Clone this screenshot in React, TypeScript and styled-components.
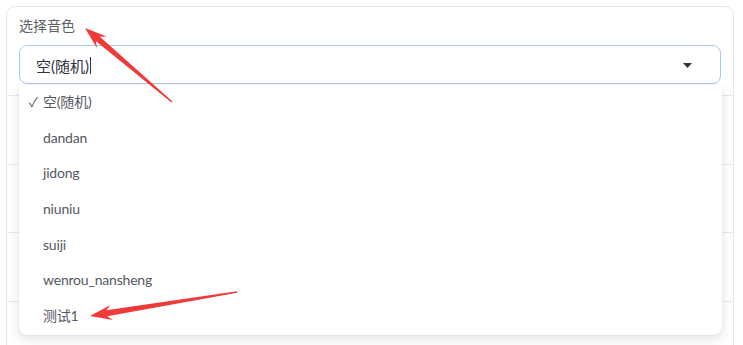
import React from 'react';
import styled, { createGlobalStyle } from 'styled-components';

const GlobalStyle = createGlobalStyle`
  html, body {
    margin: 0;
    padding: 0;
    background: #ffffff;
    overflow: hidden;
  }
  body {
    font-family: Lato, "Noto Sans CJK SC", sans-serif;
    color: #31333f;
  }
`;

const Page = styled.div`
  position: relative;
  width: 743px;
  height: 345px;
  overflow: hidden;
  padding: 6px 9px 0 6px;
  box-sizing: border-box;
`;

const Card = styled.div`
  border: 1px solid #e4e6ea;
  border-radius: 9px;
  padding: 9px 12px 0 12px;
  height: 400px;
  position: relative;
`;

const Label = styled.div`
  font-size: 14px;
  line-height: 20px;
  color: #5d6169;
  margin-bottom: 9px;
`;

const SelectWrap = styled.div`
  position: relative;
`;

const SelectBox = styled.div`
  height: 39px;
  box-sizing: border-box;
  border: 1px solid #a9c9f2;
  border-radius: 8px;
  display: flex;
  align-items: center;
  padding: 2px 28px 0 16px;
  font-size: 15px;
  color: #31333f;
`;

const Cursor = styled.span`
  display: inline-block;
  width: 1px;
  height: 17px;
  background: #31333f;
  margin-left: 1px;
`;

const Caret = styled.svg`
  margin-left: auto;
  width: 9px;
  height: 5px;
`;

const Menu = styled.ul`
  position: absolute;
  left: 0;
  right: -1px;
  top: 40px;
  margin: 0;
  padding: 0;
  list-style: none;
  background: #ffffff;
  border-radius: 0 0 8px 8px;
  box-shadow: 0 4px 12px rgba(0, 0, 0, 0.12), 0 0 1px rgba(0, 0, 0, 0.18);
  z-index: 2;
`;

const Item = styled.li<{ $selected?: boolean }>`
  height: 35.7px;
  display: flex;
  align-items: center;
  padding: 0 0 3px ${p => (p.$selected ? '10px' : '24px')};
  box-sizing: border-box;
  font-size: 14px;
  letter-spacing: -0.2px;
  color: #54585f;
`;

const Check = styled.span`
  width: 14px;
  font-size: 13px;
  color: #54585f;
`;

const Row = styled.div`
  height: 68.5px;
  margin: 0 -12px;
  border-top: 1px solid #e8e9ec;
  box-sizing: border-box;
`;

const Spacer = styled.div`
  height: 11px;
`;

const NextInput = styled.div`
  margin-top: 39px;
  height: 40px;
  border: 1px solid #e2e4e8;
  border-radius: 8px;
`;

const Overlay = styled.svg`
  position: absolute;
  left: 0;
  top: 0;
  pointer-events: none;
  z-index: 5;
`;

// red annotation arrow, tail (tx,ty) -> tip (hx,hy)
const arrowPoints = (tx: number, ty: number, hx: number, hy: number) => {
  const dx = hx - tx;
  const dy = hy - ty;
  const len = Math.hypot(dx, dy);
  const ux = dx / len;
  const uy = dy / len;
  const nx = -uy;
  const ny = ux;
  const headLen = 22;
  const neck = 17;
  const bx = hx - ux * headLen;
  const by = hy - uy * headLen;
  const cx = hx - ux * neck;
  const cy = hy - uy * neck;
  const pts = [
    [tx + nx * 0.8, ty + ny * 0.8],
    [cx + nx * 3, cy + ny * 3],
    [bx + nx * 7.5, by + ny * 7.5],
    [hx, hy],
    [bx - nx * 7.5, by - ny * 7.5],
    [cx - nx * 3, cy - ny * 3],
    [tx - nx * 0.8, ty - ny * 0.8],
  ];
  return pts.map(p => p.map(v => v.toFixed(1)).join(',')).join(' ');
};

const options = ['dandan', 'jidong', 'niuniu', 'suiji', 'wenrou_nansheng', '测试1'];

const App = () => (
  <Page>
    <GlobalStyle />
    <Card>
      <Label>选择音色</Label>
      <SelectWrap>
        <SelectBox>
          空(随机)<Cursor />
          <Caret viewBox="0 0 9 5">
            <path d="M0 0 L9 0 L4.5 5 Z" fill="#31333f" />
          </Caret>
        </SelectBox>
        <Menu>
          <Item $selected>
            <Check>✓</Check>
            空(随机)
          </Item>
          {options.map(o => (
            <Item key={o}>{o}</Item>
          ))}
        </Menu>
      </SelectWrap>
      <Spacer />
      <Row />
      <Row />
      <Row />
      <Row />
      <NextInput />
    </Card>
    <Overlay width="743" height="345" viewBox="0 0 743 345">
      <polygon points={arrowPoints(172, 102, 85, 28)} fill="#f03a3a" />
      <polygon points={arrowPoints(237, 292, 90, 316)} fill="#f03a3a" />
    </Overlay>
  </Page>
);

export default App;
